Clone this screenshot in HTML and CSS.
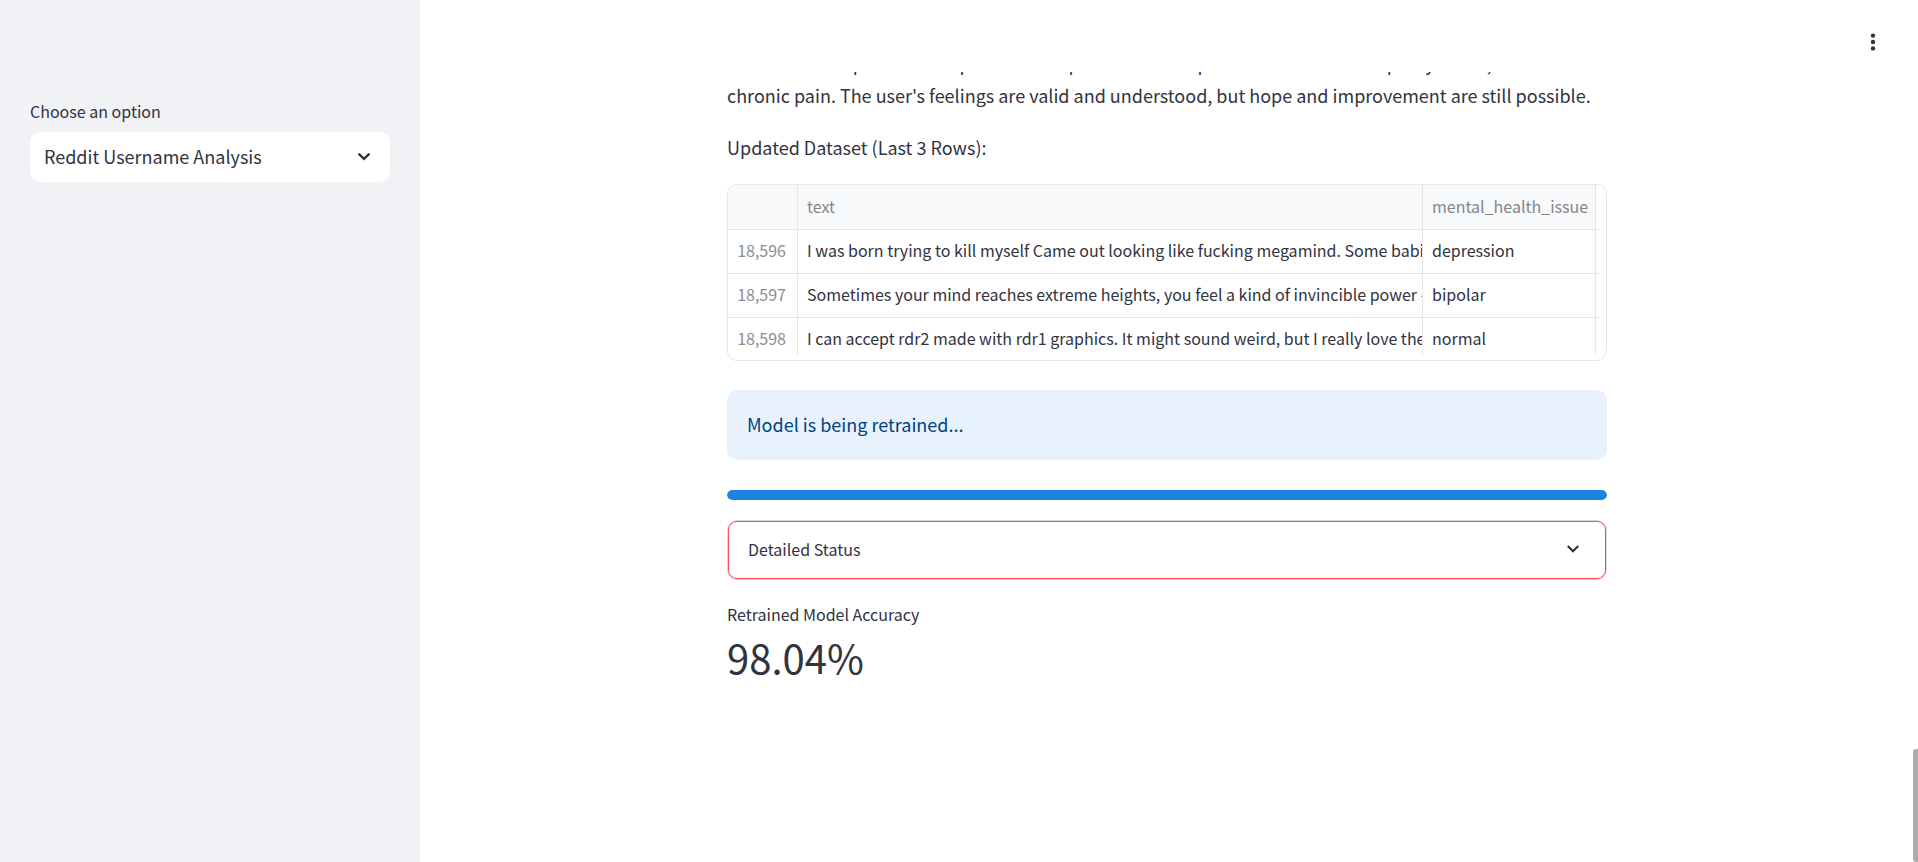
FILE: index.html
```html
<!DOCTYPE html>
<html lang="en">
<head>
<meta charset="utf-8">
<meta name="viewport" content="width=device-width, initial-scale=1">
<title>Reddit Username Analysis</title>
<link rel="stylesheet" href="styles.css">
</head>
<body>
<div class="app">
  <aside class="sidebar">
    <label class="label" for="option">Choose an option</label>
    <div class="select-box">
      <select id="option" class="select">
        <option selected>Reddit Username Analysis</option>
      </select>
      <svg class="select-icon" viewBox="0 0 12 8" width="12" height="8" aria-hidden="true"><path d="M1.3 1.3 6 5.8l4.7-4.5" fill="none" stroke="currentColor" stroke-width="2.4" stroke-linecap="round"/></svg>
    </div>
  </aside>
  <main class="main">
    <header class="topbar">
      <button class="menu" type="button" aria-label="Main menu">
        <svg viewBox="0 0 6 18" width="6" height="18" aria-hidden="true"><g fill="currentColor"><circle cx="3" cy="2.6" r="2.2"/><circle cx="3" cy="9" r="2.2"/><circle cx="3" cy="15.4" r="2.2"/></g></svg>
      </button>
    </header>
    <div class="content">
      <div class="excerpt">
        <p class="text">There is still hope to relieve pain and the person can ask partners and nurse empathy for all,<br>chronic pain. The user's feelings are valid and understood, but hope and improvement are still possible.</p>
      </div>
      <p class="text caption">Updated Dataset (Last 3 Rows):</p>
      <div class="frame">
        <div class="grid-clip">
          <table class="grid">
            <colgroup><col class="col-index"><col><col class="col-issue"><col class="col-end"></colgroup>
            <thead>
              <tr><th></th><th>text</th><th>mental_health_issue</th><th class="end"></th></tr>
            </thead>
            <tbody>
              <tr><td class="index">18,596</td><td>I was born trying to kill myself Came out looking like fucking megamind. Some babies</td><td>depression</td><td class="end"></td></tr>
              <tr><td class="index">18,597</td><td>Sometimes your mind reaches extreme heights, you feel a kind of invincible power - i</td><td>bipolar</td><td class="end"></td></tr>
              <tr><td class="index">18,598</td><td>I can accept rdr2 made with rdr1 graphics. It might sound weird, but I really love the a</td><td>normal</td><td class="end"></td></tr>
            </tbody>
          </table>
        </div>
      </div>
      <div class="alert" role="status">Model is being retrained...</div>
      <div class="progress" role="progressbar" aria-label="Retraining" aria-valuenow="100" aria-valuemin="0" aria-valuemax="100"><div class="progress-fill" style="width:100%"></div></div>
      <details class="expander">
        <summary class="summary">
          <span>Detailed Status</span>
          <svg viewBox="0 0 12 8" width="12" height="8" aria-hidden="true"><path d="M.8 1 6 6.2 11.2 1" fill="none" stroke="currentColor" stroke-width="2.2"/></svg>
        </summary>
      </details>
      <div class="metric">
        <div class="label">Retrained Model Accuracy</div>
        <div class="value">98.04%</div>
      </div>
    </div>
    <div class="scroll-thumb" aria-hidden="true"></div>
  </main>
</div>
</body>
</html>
```
FILE: styles.css
```css
* { box-sizing: border-box; }

body {
  margin: 0;
  background: #fff;
  color: #31333f;
  font: 18px/32px "Noto Sans CJK SC", "Noto Sans", sans-serif;
}

.app { display: flex; min-height: 100vh; }

.sidebar {
  flex: 0 0 420px;
  padding: 97px 30px 30px;
  background: #f0f2f6;
}

.label { display: block; font-size: 16px; line-height: 28px; }

.select-box { position: relative; margin-top: 7px; }

.select {
  display: block;
  width: 100%;
  height: 50px;
  padding: 0 44px 2px 14px;
  border: 0;
  border-radius: 10px;
  background: #fff;
  color: inherit;
  font: inherit;
  appearance: none;
}

.select-icon {
  position: absolute;
  top: 21px;
  right: 20px;
  pointer-events: none;
}

.main { position: relative; flex: 1; min-width: 0; }

.topbar {
  display: flex;
  align-items: center;
  justify-content: flex-end;
  height: 72px;
  padding: 12px 30px 0 0;
}

.menu {
  display: flex;
  align-items: center;
  justify-content: center;
  width: 30px;
  height: 40px;
  padding: 0;
  border: 0;
  background: none;
  color: inherit;
}

.content {
  width: 100%;
  max-width: 884px;
  margin: 0 auto;
  padding-right: 4px;
}

.excerpt {
  display: flex;
  flex-direction: column;
  justify-content: flex-end;
  height: 39px;
  overflow: hidden;
}

.text { margin: 0; }
.caption { margin-top: 20px; }

.frame {
  margin-top: 21px;
  padding-bottom: 5px;
  border: 1px solid #e6e7ea;
  border-radius: 10px;
  overflow: hidden;
}

.grid-clip { height: 170px; overflow: hidden; }

.grid {
  width: calc(100% - 7px);
  table-layout: fixed;
  border-collapse: separate;
  border-spacing: 0;
  font-size: 16px;
}

.col-index { width: 70px; }
.col-issue { width: 173px; }
.col-end { width: 3px; }

.grid th,
.grid td {
  height: 44px;
  padding: 0 0 0 9px;
  border-right: 1px solid #e4e5e8;
  border-bottom: 1px solid #e4e5e8;
  overflow: hidden;
  font-weight: 400;
  line-height: 40px;
  text-align: left;
  vertical-align: top;
  white-space: nowrap;
}

.grid th {
  height: 45px;
  line-height: 42px;
  background: #f8f9fb;
  color: #83858c;
}

.grid .index {
  padding: 0 11px 0 0;
  color: #8b8d94;
  text-align: right;
}

.grid .end { padding: 0; border-right: 0; background: #fff; }

.alert {
  margin-top: 29px;
  padding: 18px 20px 20px;
  border-radius: 10px;
  background: #e8f2fc;
  color: #004280;
}

.progress {
  height: 10px;
  margin-top: 30px;
  border-radius: 5px;
  background: #f0f2f6;
  overflow: hidden;
}

.progress-fill { height: 100%; border-radius: 5px; background: #1c83e1; }

.expander {
  margin-top: 20px;
  border: 1px solid #d6d6d9;
  border-radius: 10px;
}

.summary {
  display: flex;
  align-items: center;
  justify-content: space-between;
  height: 58px;
  padding: 0 26px 2px 19px;
  border: 1px solid #ff4b4b;
  border-radius: 9px;
  font-size: 16px;
  list-style: none;
  cursor: pointer;
}

.metric { margin-top: 20px; }
.value { font-size: 40px; line-height: 58px; }

.scroll-thumb {
  position: absolute;
  right: 0;
  bottom: 0;
  width: 5px;
  height: 113px;
  border-radius: 3px 0 0 3px;
  background: #adadb1;
}
```
